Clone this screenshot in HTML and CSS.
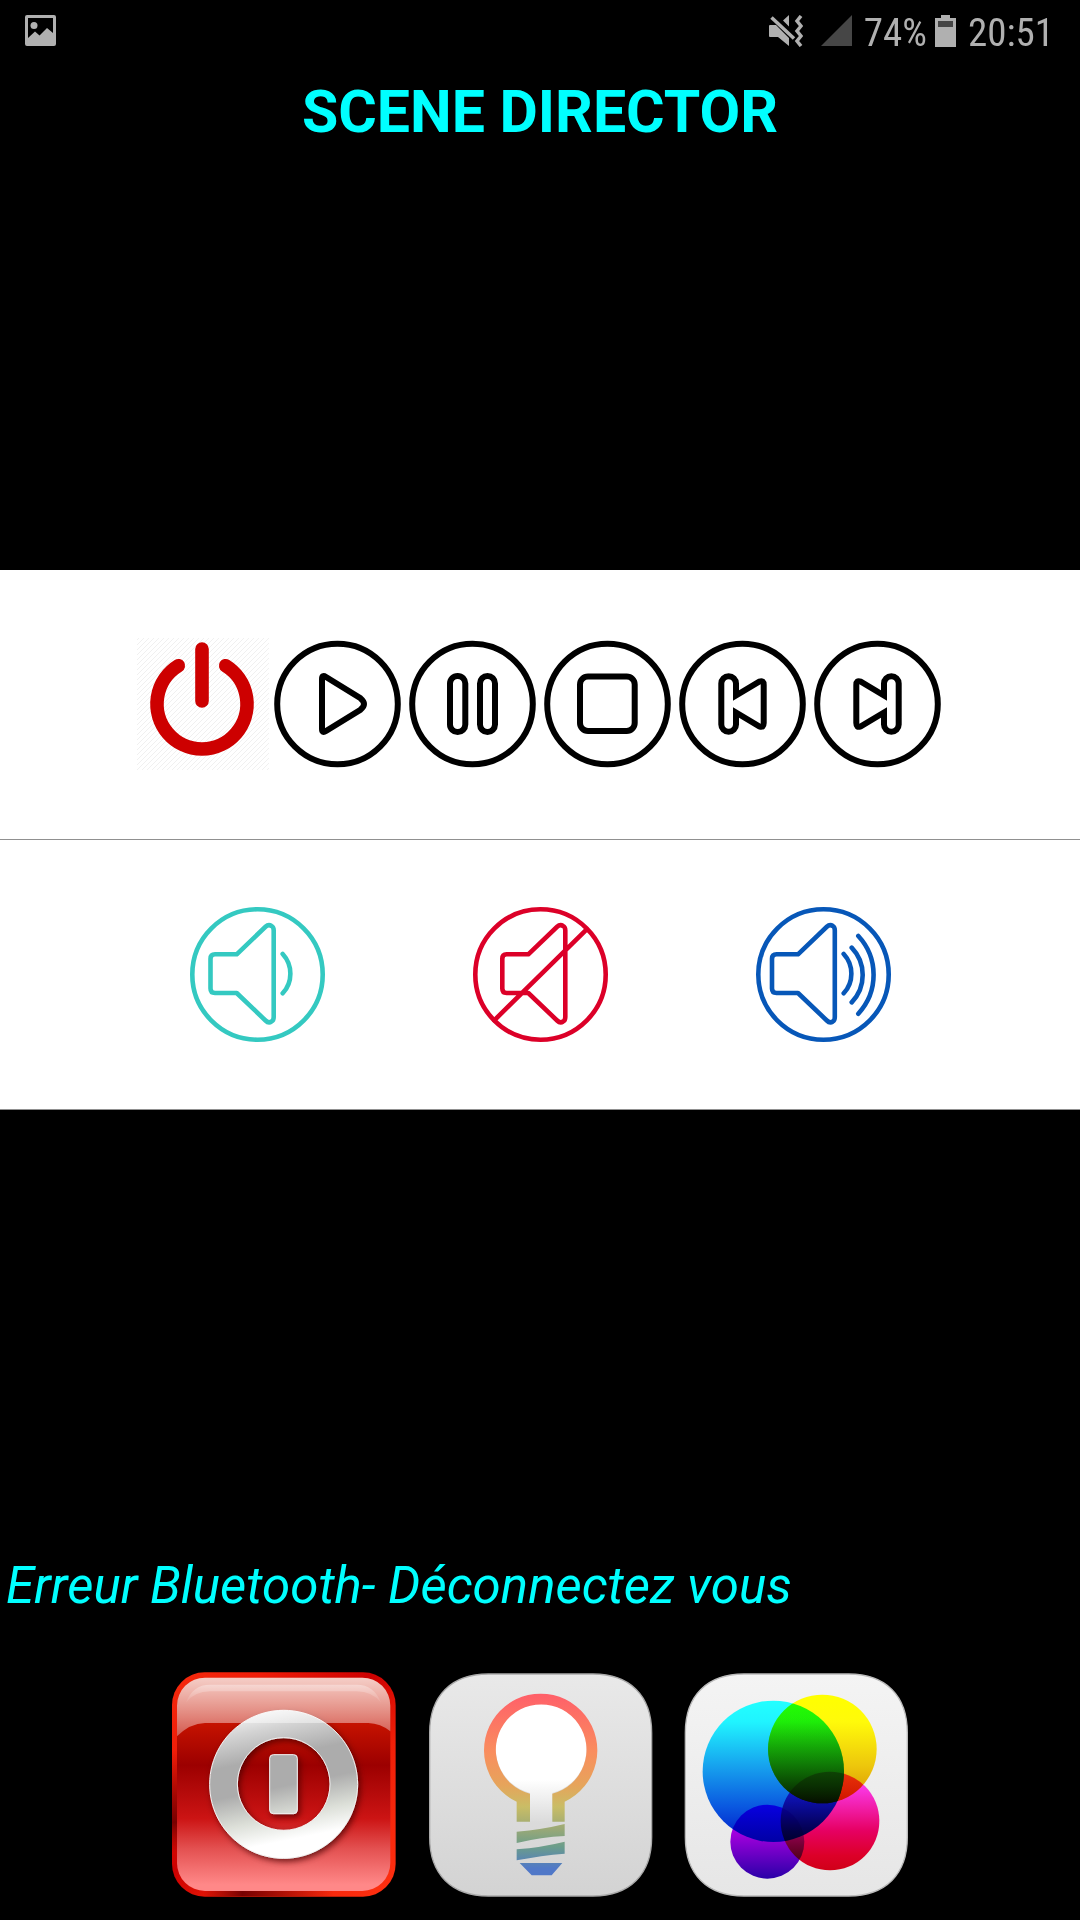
FILE: index.html
```html
<!DOCTYPE html>
<html lang="fr">
<head>
<meta charset="utf-8">
<meta name="viewport" content="width=device-width, initial-scale=1">
<title>Scene Director</title>
<link rel="stylesheet" href="styles.css">
</head>
<body>
<div class="screen">
  <div class="status-bar">
    <svg class="icon-picture" viewBox="0 0 31 31" aria-hidden="true"><path fill="#b0b0b0" fill-rule="evenodd" d="M2 0H29Q31 0 31 2V29Q31 31 29 31H2Q0 31 0 29V2Q0 0 2 0ZM3 3V23L10 16.500L14.500 20.500L22 13L28 18V3Z"/><circle cx="9" cy="10.500" r="3.500" fill="#b0b0b0"/></svg>
    <div class="status-info">
      <svg class="icon-mute" viewBox="0 0 34 32" aria-hidden="true"><path fill="#b0b0b0" d="M14 5.500L20 0V11.500ZM1 10H7L20 23V31L9 22H1Q0 22 0 21V11Q0 10 1 10Z"/><path d="M2.500 2.500L25 23.500" stroke="#b0b0b0" stroke-width="3.500" fill="none"/><path d="M32 1L28 6L32 11L28 16L32 21L28 26L32 31" stroke="#b0b0b0" stroke-width="3.500" fill="none"/></svg>
      <svg class="icon-signal" viewBox="0 0 31 31" aria-hidden="true"><path fill="#464646" d="M31 0V31H0Z"/></svg>
      <span class="percent">74%</span>
      <svg class="icon-battery" viewBox="0 0 21 32" aria-hidden="true"><path fill="#b0b0b0" d="M6 0H15V3H21V32H0V3H6Z"/><path fill="#464646" d="M3 6H18V12H3Z"/></svg>
      <span>20:51</span>
    </div>
  </div>
  <h1 class="title">SCENE DIRECTOR</h1>

  <main class="panel">
    <div class="row transport">
      <button class="control" aria-label="Power"><svg viewBox="0 0 135 135">
        <defs><pattern id="hatch" width="5" height="5" patternUnits="userSpaceOnUse"><path d="M-1 1L1-1M-1 6L6-1M4 6L6 4" stroke="#f0f0f0" stroke-width="1"/></pattern></defs>
        <rect x="2" y="1" width="132" height="132" fill="url(#hatch)"/>
        <path d="M43.300 28.700A45 45 0 1 0 90.700 28.700M67 12V64" fill="none" stroke="#cd0000" stroke-width="13.600" stroke-linecap="round"/></svg></button>
      <button class="control" aria-label="Play"><svg class="line" viewBox="0 0 135 135"><circle cx="67.500" cy="67" r="60.300"/><path d="M52 42Q52 37.500 56 40L90.500 61.300Q97.500 67 90.500 72.700L56 94Q52 96.500 52 92Z"/></svg></button>
      <button class="control" aria-label="Pause"><svg class="line" viewBox="0 0 135 135"><circle cx="67.500" cy="67" r="60.300"/><rect x="45" y="39" width="15.300" height="56" rx="7.600"/><rect x="75" y="39" width="15" height="56" rx="7.500"/></svg></button>
      <button class="control" aria-label="Stop"><svg class="line" viewBox="0 0 135 135"><circle cx="67.500" cy="67" r="60.300"/><rect x="40" y="39.500" width="54.700" height="54.500" rx="8"/></svg></button>
      <button class="control" aria-label="Previous"><svg class="line" viewBox="0 0 135 135"><circle cx="67.500" cy="67" r="60.300"/><path d="M61 58.500V46.500A7.300 7.300 0 0 0 46.300 46.500V87.500A7.300 7.300 0 0 0 61 87.500V75.500L84.500 89.500Q88.700 91 88.700 86V48Q88.700 43 84.500 44.500Z"/></svg></button>
      <button class="control" aria-label="Next"><svg class="line" viewBox="0 0 135 135"><circle cx="67.500" cy="67" r="60.300"/><path d="M74 58.500V46.500A7.300 7.300 0 0 1 88.700 46.500V87.500A7.300 7.300 0 0 1 74 87.500V75.500L50.500 89.500Q46.300 91 46.300 86V48Q46.300 43 50.500 44.500Z"/></svg></button>
    </div>
    <div class="row volume">
      <button class="control low" aria-label="Volume down"><svg viewBox="0 0 135 135"><circle cx="67.500" cy="67.500" r="65.200"/><path d="M46.700 47.300H25Q20.500 47.300 20.500 51.800V81.500Q20.500 86 25 86H46.700L75.500 113.500Q78.500 116.500 81.500 114.500Q83.700 113.500 83.700 110V23.500Q83.700 20 81.500 19Q78.500 17 75.500 19.800ZM92.700 47A29 29 0 0 1 92.700 86.300"/></svg></button>
      <button class="control mute" aria-label="Mute"><svg viewBox="0 0 135 135"><circle cx="67.500" cy="67.500" r="65.200"/><path d="M55.300 47.300H33.600Q29.300 47.300 29.300 51.800V81.500Q29.300 86 33.600 86H55.300L84.100 113.500Q87.100 116.500 90.100 114.500Q92.300 113.500 92.300 110V23.500Q92.300 20 90.100 19Q87.100 17 84.100 19.800ZM21.300 113.300L113.700 22.300"/></svg></button>
      <button class="control high" aria-label="Volume up"><svg viewBox="0 0 135 135"><circle cx="67.500" cy="67.500" r="65.200"/><path d="M42 47.300H20.500Q16 47.300 16 51.800V81.500Q16 86 20.500 86H42L70.800 113.500Q73.800 116.500 76.800 114.500Q78.800 113.500 78.800 110V23.500Q78.800 20 76.800 19Q73.800 17 70.800 19.800ZM87.700 47A29 29 0 0 1 87.700 86.300M95.700 40.700A39.400 39.400 0 0 1 95.700 95.300M102.300 29A57 57 0 0 1 102.300 106.700"/></svg></button>
    </div>
  </main>

  <p class="message">Erreur Bluetooth- Déconnectez vous</p>

  <nav class="apps">
    <button class="app" aria-label="Éteindre"><svg viewBox="36 36 672 674">
      <defs>
        <linearGradient id="redEdge" x1="0" y1="0" x2="1" y2="1"><stop offset="0" stop-color="#f52a0c"/><stop offset=".2" stop-color="#f01c08"/><stop offset=".45" stop-color="#cc0000"/><stop offset=".65" stop-color="#ef1f08"/><stop offset="1" stop-color="#ff3010"/></linearGradient>
        <linearGradient id="redBody" x1="0" y1="0" x2="0" y2="1"><stop offset="0" stop-color="#d63a20"/><stop offset=".22" stop-color="#c41200"/><stop offset=".41" stop-color="#9c0000"/><stop offset=".66" stop-color="#cc1414"/><stop offset=".8" stop-color="#e35050"/><stop offset=".97" stop-color="#ff8888"/></linearGradient>
        <linearGradient id="gloss" x1="0" y1="0" x2="0" y2="1"><stop offset="0" stop-color="#fff" stop-opacity=".75"/><stop offset="1" stop-color="#fff" stop-opacity=".32"/></linearGradient>
        <linearGradient id="shine" x1="0" y1="0" x2="0" y2="1"><stop offset="0" stop-color="#fff" stop-opacity=".35"/><stop offset="1" stop-color="#fff" stop-opacity="0.050"/></linearGradient>
        <linearGradient id="metal" gradientUnits="userSpaceOnUse" x1="320" y1="150" x2="410" y2="590"><stop offset="0" stop-color="#f2f2f2"/><stop offset=".12" stop-color="#d4d4d4"/><stop offset=".32" stop-color="#acacac"/><stop offset=".52" stop-color="#acacac"/><stop offset=".72" stop-color="#dcdfd8"/><stop offset=".88" stop-color="#fff"/></linearGradient>
        <linearGradient id="bottomDark"><stop offset="0" stop-color="#700" stop-opacity="0"/><stop offset=".3" stop-color="#700"/><stop offset="1" stop-color="#700" stop-opacity="0"/></linearGradient>
        <linearGradient id="sideDark" x1="0" y1="0" x2="0" y2="1"><stop offset="0" stop-color="#800" stop-opacity="0"/><stop offset=".7" stop-color="#700"/><stop offset="1" stop-color="#800" stop-opacity="0"/></linearGradient>
        <radialGradient id="glow" cx=".5" cy=".85" r=".6"><stop offset="0" stop-color="#d83030" stop-opacity=".7"/><stop offset="1" stop-color="#b00000" stop-opacity="0"/></radialGradient>
        <filter id="shadow" x="-20%" y="-20%" width="140%" height="140%"><feDropShadow dx="6" dy="8" stdDeviation="9" flood-color="#400" flood-opacity=".75"/></filter>
      </defs>
      <rect x="36" y="37" width="671" height="673" rx="98" fill="url(#redEdge)"/>
      <rect x="36" y="270" width="16" height="310" fill="url(#sideDark)"/>
      <rect x="130" y="693" width="390" height="16" fill="url(#bottomDark)"/>
      <rect x="51" y="53" width="640" height="640" rx="84" fill="url(#redBody)"/>
      <g filter="url(#shadow)" stroke="#f4f4f4" stroke-width="3">
        <path fill="url(#metal)" fill-rule="evenodd" d="M371 151A222 222 0 1 1 370.900 151ZM371 233A139 139 0 1 0 371.100 233Z"/>
        <rect x="329" y="284" width="83" height="177" rx="11" fill="url(#metal)"/>
      </g>
      <path fill="url(#gloss)" d="M51 229V137A84 84 0 0 1 135 53H607A84 84 0 0 1 691 137V214Q662 190 625 189H135Q90 190 51 229Z"/>
      <path fill="url(#shine)" d="M78 128Q98 74 150 74H590Q642 74 663 128Q636 94 590 94H150Q104 94 78 128Z"/>
    </svg></button>
    <button class="app" aria-label="Lumière"><svg viewBox="39 37 672 672">
      <defs>
        <linearGradient id="tileGrey" x1="0" y1="0" x2="0" y2="1"><stop offset="0" stop-color="#e9e9e9"/><stop offset="1" stop-color="#d3d3d3"/></linearGradient>
        <linearGradient id="rainbow" gradientUnits="userSpaceOnUse" x1="0" y1="105" x2="0" y2="648"><stop offset="0" stop-color="#ff6069"/><stop offset=".32" stop-color="#f98e5e"/><stop offset=".5" stop-color="#e6a45b"/><stop offset=".62" stop-color="#c9bd66"/><stop offset=".74" stop-color="#9ba976"/><stop offset=".84" stop-color="#6b9d8b"/><stop offset=".96" stop-color="#5078c8"/><stop offset="1" stop-color="#5078c8"/></linearGradient>
        <linearGradient id="bulb" gradientUnits="userSpaceOnUse" x1="0" y1="360" x2="0" y2="490"><stop offset="0" stop-color="#fff"/><stop offset="1" stop-color="#dadada"/></linearGradient>
      </defs>
      <path fill="url(#tileGrey)" stroke="#aaa" stroke-width="4" d="M220 43H534C645 43 710 108 710 219V533C710 644 645 709 534 709H220C109 709 44 644 44 533V219C44 108 109 43 220 43Z"/>
      <path fill="url(#bulb)" d="M345 488V400A136 136 0 1 1 412 400V488Z"/>
      <path fill="url(#rainbow)" d="M305 486V426A170 170 0 1 1 449 426V486H412V402A136 136 0 1 0 345 402V486ZM305 516Q380 510 449 493V529Q380 532 305 550ZM305 569Q380 563 449 546V582Q380 587 305 602ZM314 610H442L410 647H350Z"/>
    </svg></button>
    <button class="app" aria-label="Couleurs"><svg viewBox="42 37 672 672">
      <defs>
        <linearGradient id="tileWhite" x1="0" y1="0" x2="0" y2="1"><stop offset="0" stop-color="#f4f4f4"/><stop offset="1" stop-color="#e6e6e6"/></linearGradient>
        <linearGradient id="blue" x1="0" y1="0" x2="0" y2="1"><stop offset="0" stop-color="#22ffff"/><stop offset=".15" stop-color="#20f4ff"/><stop offset=".5" stop-color="#1598ec"/><stop offset=".75" stop-color="#0a58e0"/><stop offset="1" stop-color="#0018c8"/></linearGradient>
        <linearGradient id="yellow" x1="0" y1="0" x2="0" y2="1"><stop offset="0" stop-color="#ffff00"/><stop offset=".25" stop-color="#fffa0a"/><stop offset=".65" stop-color="#edc70c"/><stop offset="1" stop-color="#d89000"/></linearGradient>
        <linearGradient id="pink" x1="0" y1="0" x2="0" y2="1"><stop offset="0" stop-color="#ff44ff"/><stop offset=".2" stop-color="#f832d8"/><stop offset=".6" stop-color="#e60062"/><stop offset=".85" stop-color="#dc0028"/><stop offset="1" stop-color="#d00018"/></linearGradient>
        <linearGradient id="purple" x1="0" y1="0" x2="0" y2="1"><stop offset="0" stop-color="#b400ff"/><stop offset=".4" stop-color="#a000dc"/><stop offset="1" stop-color="#2a00a8"/></linearGradient>
        <linearGradient id="shade" gradientUnits="userSpaceOnUse" x1="0" y1="150" x2="0" y2="430"><stop offset="0" stop-color="#10ff00" stop-opacity="0"/><stop offset="1" stop-color="#051000" stop-opacity=".85"/></linearGradient>
        <clipPath id="inBlue"><circle cx="310" cy="335" r="212"/></clipPath>
      </defs>
      <path fill="url(#tileWhite)" stroke="#bbb" stroke-width="4" d="M222 43H536C647 43 712 108 712 219V533C712 644 647 709 536 709H222C111 709 46 644 46 533V219C46 108 111 43 222 43Z"/>
      <g class="blend">
        <circle cx="310" cy="335" r="212" fill="url(#blue)"/>
        <circle cx="457" cy="268" r="163" fill="url(#yellow)"/>
        <circle cx="480" cy="484" r="148" fill="url(#pink)"/>
        <circle cx="292" cy="546" r="111" fill="url(#purple)"/>
      </g>
      <circle cx="457" cy="268" r="163" fill="url(#shade)" clip-path="url(#inBlue)"/>
    </svg></button>
  </nav>
</div>
</body>
</html>
```

FILE: styles.css
```css
* {
  box-sizing: border-box;
}

body {
  margin: 0;
  background: #000;
  color: #0ff;
  font-family: Roboto, sans-serif;
}

svg {
  display: block;
}

button {
  padding: 0;
  border: 0;
  background: none;
  cursor: pointer;
}

.screen {
  display: flex;
  flex-direction: column;
  min-height: 100vh;
}

.status-bar {
  display: flex;
  justify-content: space-between;
  align-items: flex-start;
  height: 60px;
  padding: 15px 26px 0 25px;
  color: #b0b0b0;
  font-family: "Roboto Condensed", "Liberation Sans Narrow", Roboto, sans-serif;
  font-size: 39px;
  line-height: 36px;
}

.status-info {
  display: flex;
  align-items: flex-start;
  gap: 12px;
}

.icon-picture {
  width: 31px;
  height: 31px;
}

.icon-mute {
  width: 34px;
  height: 32px;
  margin-right: 6px;
}

.icon-signal {
  width: 31px;
  height: 31px;
}

.icon-battery {
  width: 21px;
  height: 32px;
}

.percent {
  margin-right: -4px;
}

.title {
  margin: 0;
  padding-top: 16px;
  font-size: 59px;
  font-weight: 700;
  line-height: 72px;
  text-align: center;
}

.panel {
  margin: auto 0;
  background: #fff;
}

.row {
  display: flex;
  justify-content: center;
  align-items: center;
  height: 270px;
  border-bottom: 1px solid #909090;
}

.volume {
  gap: 148px;
}

.control {
  width: 135px;
  height: 135px;
}

.line {
  fill: none;
  stroke: #000;
  stroke-width: 6;
}

.volume svg {
  fill: none;
  stroke: currentColor;
  stroke-width: 4.6;
  stroke-linecap: round;
  stroke-linejoin: round;
}

.low {
  color: #34c9c1;
}

.mute {
  color: #dc0028;
}

.high {
  color: #0757b8;
}

.message {
  margin: 0;
  padding: 2px 6px 0;
  font-size: 51px;
  font-style: italic;
  line-height: 104px;
}

.apps {
  display: flex;
  justify-content: center;
  gap: 32px;
  padding: 34px 0 24px;
}

.app {
  width: 224px;
  height: 224px;
}

.app svg {
  overflow: visible;
}

.blend {
  isolation: isolate;
}

.blend circle {
  mix-blend-mode: multiply;
}
```
